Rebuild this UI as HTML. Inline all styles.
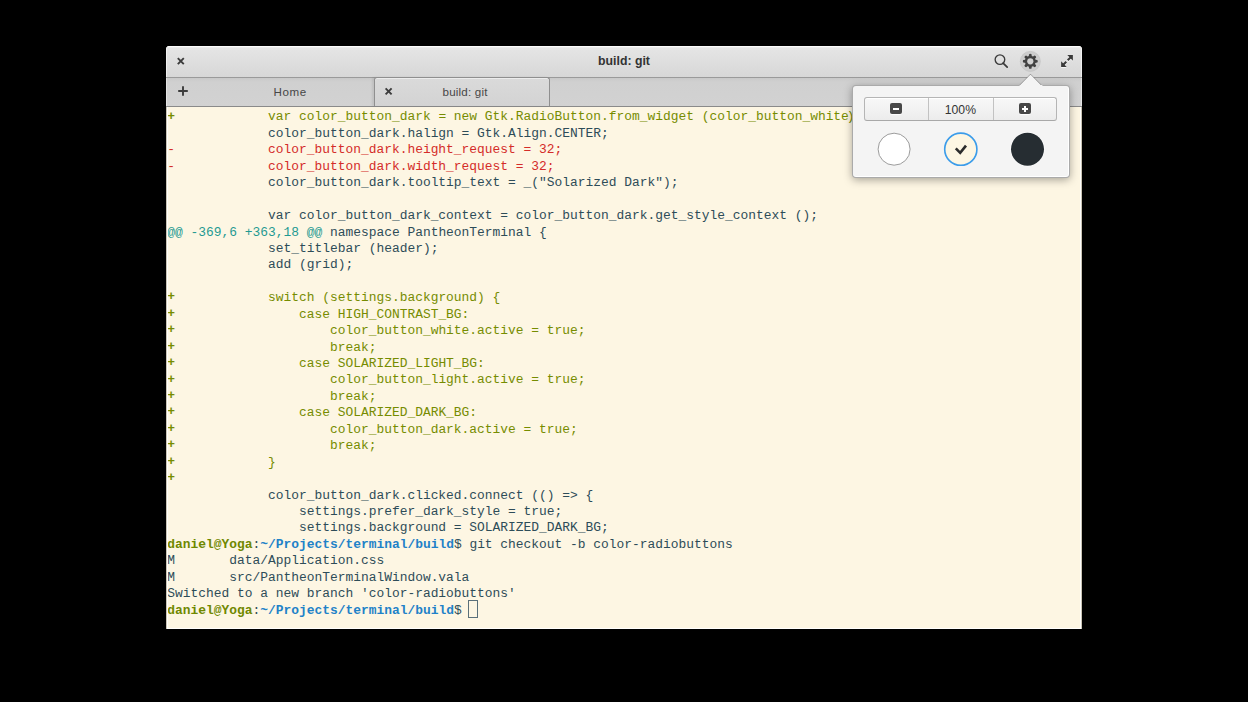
<!DOCTYPE html>
<html><head><meta charset="utf-8">
<style>
html,body{margin:0;padding:0;background:#000;width:1248px;height:702px;overflow:hidden;position:relative}
*{box-sizing:border-box}
.abs{position:absolute}
#win{position:absolute;left:166px;top:46px;width:916px;height:583px;border-radius:4px 4px 0 0;overflow:hidden;background:#fdf6e3}
#title{position:absolute;left:0;top:0;width:916px;height:32px;background:linear-gradient(#e6e6e6,#d7d7d7);border-bottom:1px solid #9a9a9a;box-shadow:inset 0 1px 0 #fcfcfc,inset 0 2px 0 #ececec,inset 1px 0 0 rgba(255,255,255,0.55),inset -1px 0 0 rgba(255,255,255,0.55)}
#title .t{position:absolute;left:0;width:916px;top:8px;line-height:14px;text-align:center;font:bold 12.3px "Liberation Sans",sans-serif;color:#333}
#tabs{position:absolute;left:0;top:32px;width:916px;height:29px;background:linear-gradient(#c9c9c9,#d0d0d0 4px,#d2d2d2);border-bottom:1px solid #8a8a8a;box-shadow:inset 1px 0 0 rgba(255,255,255,0.4),inset -1px 0 0 rgba(255,255,255,0.4)}
.tt{position:absolute;top:6.8px;line-height:13px;font:11.6px "Liberation Sans",sans-serif;letter-spacing:0.55px;color:#474747;white-space:nowrap}
#atab{position:absolute;left:208px;top:-1px;width:176px;height:29px;border:1px solid #8f8f8f;border-bottom:none;border-radius:3px 3px 0 0;background:linear-gradient(#dadada,#d3d3d3);box-shadow:inset 0 1px 0 #ececec,-2px 0 2px rgba(0,0,0,0.08)}
#term{position:absolute;left:1.3px;top:63.45px;width:914px;height:522px;font-family:"Liberation Mono",monospace;font-size:12.91px;line-height:16.44px;color:#2d4c58}
#term div{height:16.44px;white-space:pre}
.g{color:#768c00}.r{color:#d42c29}.c{color:#1f9a92}.bg{color:#6f8800;font-weight:bold;-webkit-text-stroke:0}.bb{color:#1f82c8;font-weight:bold;-webkit-text-stroke:0}.pl{position:relative;top:-0.9px;font-weight:bold}
#cursor{position:absolute;left:468px;top:600px;width:10px;height:18.2px;border:1px solid #5a707a}
#pop{position:absolute;left:852px;top:85px;width:217.5px;height:92.5px;background:#f4f4f4;border:1px solid rgba(0,0,0,0.3);border-radius:4px;box-shadow:0 2px 8px rgba(0,0,0,0.34),inset 0 -1px 0 #fff,inset -1px 0 0 #fff}
#arrow{position:absolute;left:1019px;top:73px;width:24px;height:14px}
#bgrp{position:absolute;left:864px;top:97px;width:193px;height:24px;border:1px solid #b5b5b5;border-bottom-color:#a8a8a8;border-radius:3px;background:linear-gradient(#f8f8f8,#ececec);box-shadow:inset 0 1px 0 #fff}
.sep{position:absolute;top:0;width:1px;height:22px;background:#c2c2c2}
.sq{position:absolute;width:12px;height:11.2px;border-radius:2px;background:#484848;box-shadow:0 1px 1px rgba(255,255,255,0.9)}
.circ{position:absolute;width:33px;height:33px;border-radius:50%}
</style></head><body>
<div id="win">
  <div id="title">
    <div class="t">build: git</div>
  </div>
  <div id="tabs">
    <div id="atab"></div>
    <div class="tt" style="left:107.5px">Home</div>
    <div class="tt" style="left:276.5px;letter-spacing:0.2px">build: git</div>
  </div>
  <div id="term"><div class="g"><span class="pl">+</span>            var color_button_dark = new Gtk.RadioButton.from_widget (color_button_white<span style="position:relative;left:-2.2px">);</span></div><div>             color_button_dark.halign = Gtk.Align.CENTER;</div><div class="r">-            color_button_dark.height_request = 32;</div><div class="r">-            color_button_dark.width_request = 32;</div><div>             color_button_dark.tooltip_text = _("Solarized Dark");</div><div> </div><div>             var color_button_dark_context = color_button_dark.get_style_context ();</div><div><span class="c">@@ -369,6 +363,18 @@</span> namespace PantheonTerminal {</div><div>             set_titlebar (header);</div><div>             add (grid);</div><div> </div><div class="g"><span class="pl">+</span>            switch (settings.background) {</div><div class="g"><span class="pl">+</span>                case HIGH_CONTRAST_BG:</div><div class="g"><span class="pl">+</span>                    color_button_white.active = true;</div><div class="g"><span class="pl">+</span>                    break;</div><div class="g"><span class="pl">+</span>                case SOLARIZED_LIGHT_BG:</div><div class="g"><span class="pl">+</span>                    color_button_light.active = true;</div><div class="g"><span class="pl">+</span>                    break;</div><div class="g"><span class="pl">+</span>                case SOLARIZED_DARK_BG:</div><div class="g"><span class="pl">+</span>                    color_button_dark.active = true;</div><div class="g"><span class="pl">+</span>                    break;</div><div class="g"><span class="pl">+</span>            }</div><div class="g"><span class="pl">+</span></div><div>             color_button_dark.clicked.connect (() =&gt; {</div><div>                 settings.prefer_dark_style = true;</div><div>                 settings.background = SOLARIZED_DARK_BG;</div><div><span class="bg">daniel@Yoga</span>:<span class="bb">~/Projects/terminal/build</span>$ git checkout -b color-radiobuttons</div><div>M       data/Application.css</div><div>M       src/PantheonTerminalWindow.vala</div><div>Switched to a new branch 'color-radiobuttons'</div><div><span class="bg">daniel@Yoga</span>:<span class="bb">~/Projects/terminal/build</span>$ </div></div>
</div>
<div class="abs" style="left:166px;top:107px;width:916px;height:522px;border:1px solid rgba(0,0,0,0.2);border-top:none;border-bottom:none;box-shadow:inset 1px 0 0 rgba(255,255,255,0.85),inset -1px 0 0 rgba(255,255,255,0.85),inset 0 -1px 0 rgba(255,255,255,0.9)"></div>
<div id="cursor"></div>
<!-- titlebar icons -->
<svg class="abs" style="left:170px;top:51px" width="22" height="22" viewBox="0 0 22 22"><path d="M7.8 7.2L13.8 13.2M13.8 7.2L7.8 13.2" stroke="#3c3c3c" stroke-width="1.9" fill="none"/></svg>
<svg class="abs" style="left:172px;top:80px" width="22" height="22" viewBox="0 0 22 22"><path d="M11 6.2V15.8M6.2 11H15.8" stroke="#3c3c3c" stroke-width="1.9" fill="none"/></svg>
<svg class="abs" style="left:378px;top:81px" width="22" height="22" viewBox="0 0 22 22"><path d="M7.6 7.4L13.6 13.4M13.6 7.4L7.6 13.4" stroke="#3c3c3c" stroke-width="1.9" fill="none"/></svg>
<svg class="abs" style="left:990px;top:50px" width="22" height="22" viewBox="0 0 22 22"><circle cx="9.95" cy="9.6" r="4.8" stroke="#3a3a3a" stroke-width="1.35" fill="none"/><path d="M13.1 13.1L17.2 17.2" stroke="#3a3a3a" stroke-width="1.7" stroke-linecap="round"/></svg>
<svg class="abs" style="left:1018px;top:49px" width="25" height="25" viewBox="0 0 25 25"><circle cx="12.3" cy="12.4" r="10" fill="#cdcdcd" stroke="#c4c4c4" stroke-width="0.8"/>
<g transform="translate(12.3 12.3)" fill="#424242"><path id="tooth" d="M-1.6 -4.2L-1.25 -7.1Q0 -7.9 1.25 -7.1L1.6 -4.2Z"/><use href="#tooth" transform="rotate(45)"/><use href="#tooth" transform="rotate(90)"/><use href="#tooth" transform="rotate(135)"/><use href="#tooth" transform="rotate(180)"/><use href="#tooth" transform="rotate(225)"/><use href="#tooth" transform="rotate(270)"/><use href="#tooth" transform="rotate(315)"/><circle r="5.5"/><circle r="3.1" fill="#d0d0d0"/></g></svg>
<svg class="abs" style="left:1056px;top:50px" width="22" height="22" viewBox="0 0 22 22"><g style="filter:drop-shadow(0 1px 0 rgba(255,255,255,0.7))"><g fill="#3a3a3a"><path d="M11.3 5.1H16.9V10.7Z"/><path d="M5.1 11.3V16.9H10.7Z"/></g><path d="M15 7L11.7 10.3M7 15L10.3 11.7" stroke="#3a3a3a" stroke-width="2"/></g></svg>
<!-- popover -->
<div id="pop"></div>
<svg id="arrow" viewBox="0 0 24 14"><path d="M0.3 12.5L11.5 1.2L22.7 12.5" fill="#f4f4f4" stroke="rgba(0,0,0,0.3)" stroke-width="1"/><rect x="0.6" y="12" width="22.8" height="2" fill="#f4f4f4"/></svg>
<div id="bgrp"><div class="sep" style="left:63.2px"></div><div class="sep" style="left:128.2px"></div></div>
<div class="sq" style="left:890px;top:103.2px"></div><div class="abs" style="left:893px;top:108px;width:6px;height:2px;background:#fff"></div>
<div class="sq" style="left:1018.5px;top:103.2px"></div><div class="abs" style="left:1021.5px;top:108px;width:6px;height:2px;background:#fff"></div><div class="abs" style="left:1023.5px;top:106px;width:2px;height:6px;background:#fff"></div>
<div class="abs" style="left:928.4px;top:102.5px;width:64px;text-align:center;font:12.2px 'Liberation Sans',sans-serif;line-height:14px;color:#333">100%</div>
<svg class="abs" style="left:870px;top:125px" width="180" height="50" viewBox="0 0 180 50">
<circle cx="24.1" cy="24.2" r="16" fill="#fff" stroke="#9c9c9c" stroke-width="1"/>
<circle cx="90.8" cy="24.2" r="16.1" fill="#fdf6e3" stroke="#3b9cea" stroke-width="1.6"/>
<path d="M85.8 23.4L90.2 27.9L96 20.6" stroke="#2c2c2c" stroke-width="2.6" fill="none"/>
<circle cx="157.5" cy="24.2" r="17.2" fill="rgba(255,255,255,0.75)"/>
<circle cx="157.5" cy="24.2" r="16.5" fill="#262d32"/>
</svg>
</body></html>
